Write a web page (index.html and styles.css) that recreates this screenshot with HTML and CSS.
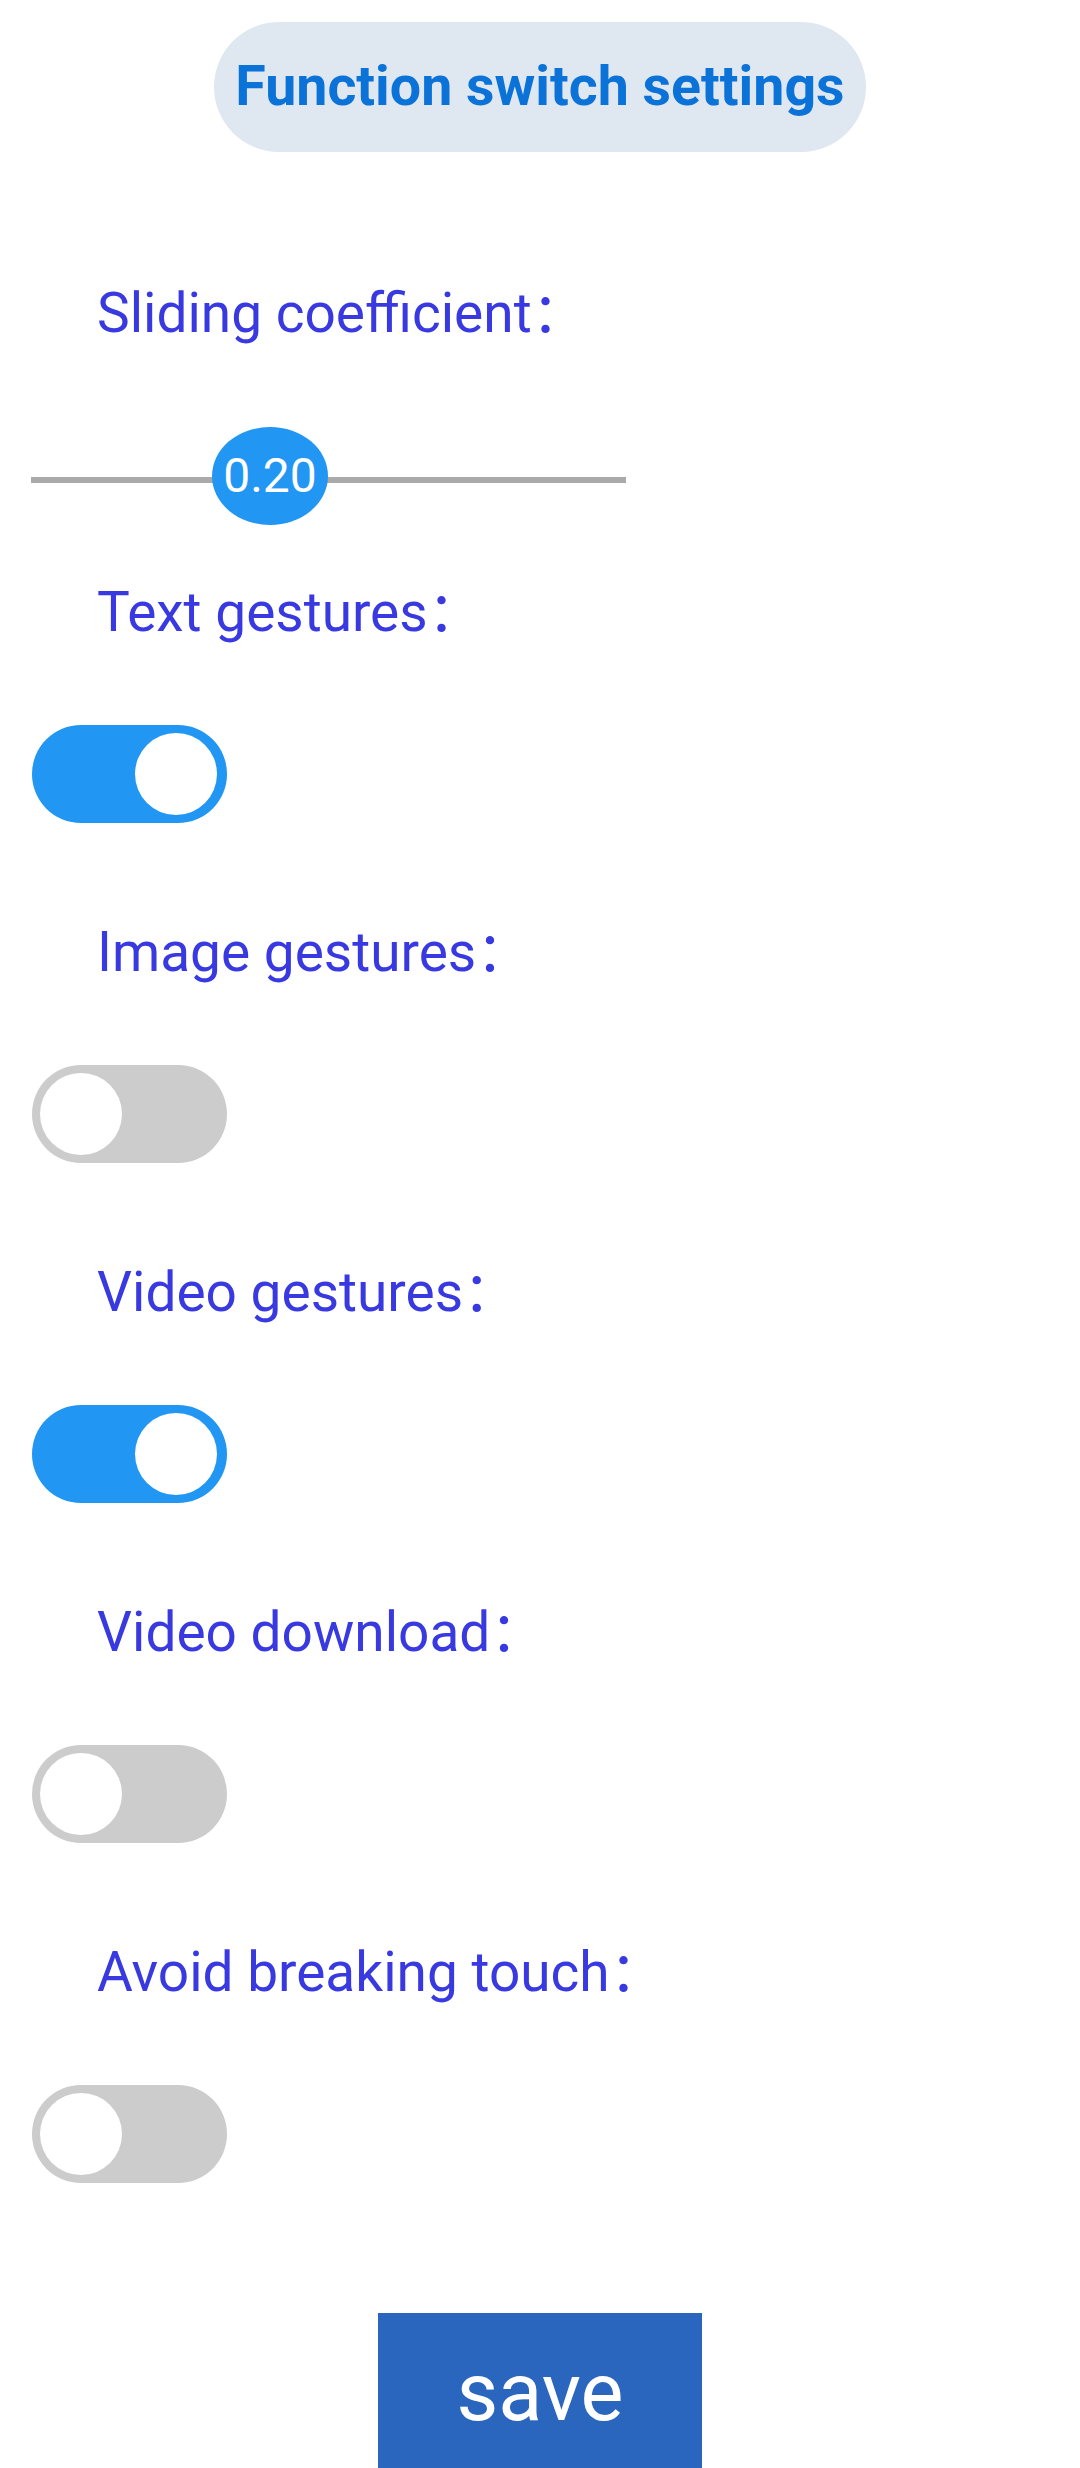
FILE: index.html
```html
<!DOCTYPE html>
<html lang="en">
<head>
<meta charset="utf-8">
<title>Function switch settings</title>
<link rel="stylesheet" href="styles.css">
</head>
<body>
<div class="page">
  <header class="header">
    <div class="title-pill">Function switch settings</div>
  </header>

  <section class="item item-first">
    <div class="label">Sliding coefficient：</div>
    <div class="slider">
      <div class="slider-track"></div>
      <div class="slider-thumb">0.20</div>
    </div>
  </section>

  <section class="item item-after-slider">
    <div class="label">Text gestures：</div>
    <div class="toggle on"><span class="knob"></span></div>
  </section>

  <section class="item">
    <div class="label">Image gestures：</div>
    <div class="toggle"><span class="knob"></span></div>
  </section>

  <section class="item">
    <div class="label">Video gestures：</div>
    <div class="toggle on"><span class="knob"></span></div>
  </section>

  <section class="item">
    <div class="label">Video download：</div>
    <div class="toggle"><span class="knob"></span></div>
  </section>

  <section class="item">
    <div class="label">Avoid breaking touch：</div>
    <div class="toggle"><span class="knob"></span></div>
  </section>

  <div class="actions">
    <button class="save-btn" type="button">save</button>
  </div>
</div>
</body>
</html>
```

FILE: styles.css
```css
* {
  box-sizing: border-box;
}

html, body {
  margin: 0;
  padding: 0;
  background: #ffffff;
}

body {
  font-family: Roboto, "Noto Sans CJK SC", sans-serif;
  width: 1080px;
  height: 2468px;
  overflow: hidden;
}

.page {
  display: flex;
  flex-direction: column;
}

.header {
  display: flex;
  justify-content: center;
  padding-top: 22px;
}

.title-pill {
  height: 130px;
  line-height: 130px;
  padding: 0 21px;
  border-radius: 65px;
  background: #dfe7f0;
  color: #0b72d8;
  font-size: 55.5px;
  font-weight: 700;
  white-space: nowrap;
}

.item {
  display: flex;
  flex-direction: column;
  align-items: flex-start;
  padding-top: 97px;
}

.item-first {
  padding-top: 129px;
}

.item-after-slider {
  padding-top: 55px;
}

.label {
  height: 64px;
  line-height: 64px;
  padding-left: 97px;
  font-size: 55px;
  color: #3939e1;
  white-space: nowrap;
}

.slider {
  position: relative;
  margin-top: 82px;
  margin-left: 31px;
  width: 595px;
  height: 98px;
}

.slider-track {
  position: absolute;
  left: 0;
  right: 0;
  top: 50px;
  height: 6px;
  background: #aaaaaa;
}

.slider-thumb {
  position: absolute;
  left: 181px;
  top: 0;
  width: 116px;
  height: 98px;
  border-radius: 50%;
  background: #2196f3;
  color: #ffffff;
  font-size: 48px;
  line-height: 98px;
  text-align: center;
}

.toggle {
  display: flex;
  align-items: center;
  justify-content: flex-start;
  margin-top: 81px;
  margin-left: 32px;
  width: 195px;
  height: 98px;
  padding: 0 8px;
  border-radius: 49px;
  background: #cccccc;
}

.toggle.on {
  justify-content: flex-end;
  padding: 0 10px;
  background: #2196f3;
}

.knob {
  display: block;
  width: 82px;
  height: 82px;
  border-radius: 50%;
  background: #ffffff;
}

.actions {
  display: flex;
  justify-content: center;
  padding-top: 130px;
}

.save-btn {
  width: 324px;
  height: 160px;
  border: none;
  border-radius: 0;
  background: #2a66be;
  color: #ffffff;
  font-family: Roboto, sans-serif;
  font-size: 81px;
  line-height: 160px;
  padding: 0;
}
```
